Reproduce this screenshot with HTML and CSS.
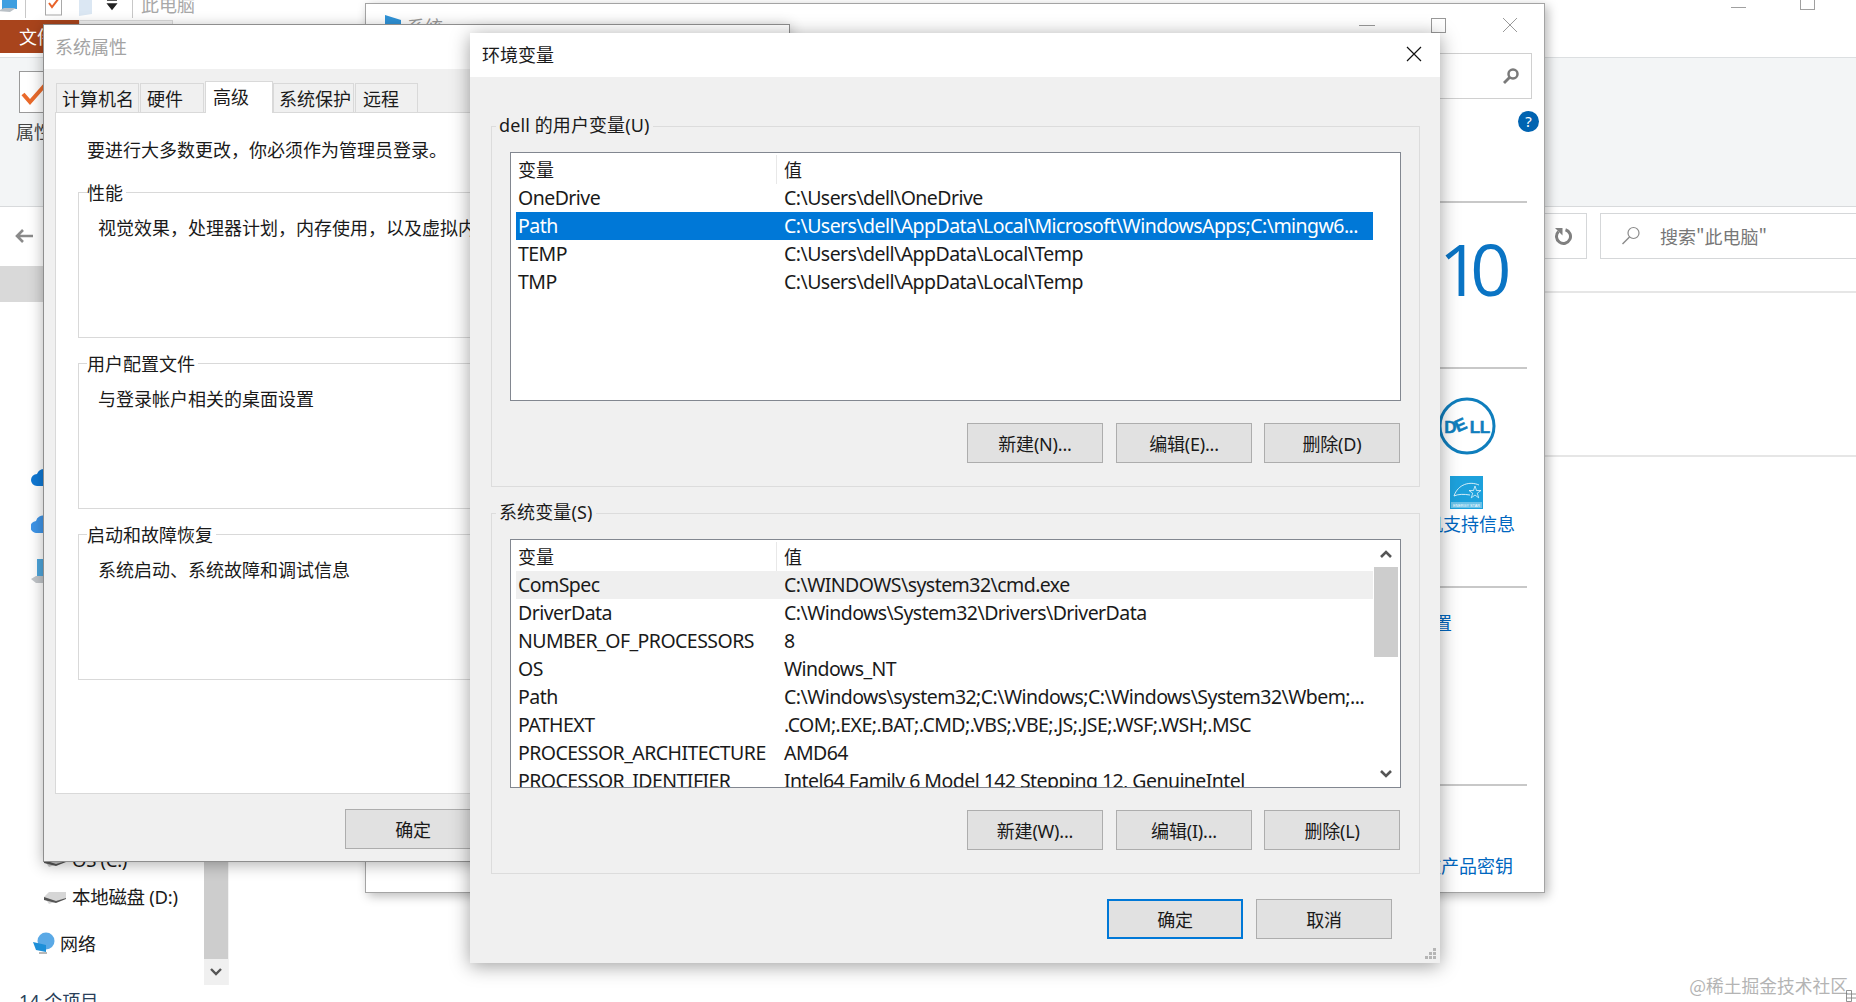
FILE: index.html
```html
<!DOCTYPE html>
<html lang="zh-CN">
<head>
<meta charset="utf-8">
<title>环境变量</title>
<link rel="stylesheet" href="styles.css">
</head>
<body>
<div class="desktop">

  <section class="explorer">
    <div class="qat">
      <svg class="qat-pc" width="20" height="26" viewBox="0 0 20 26"><path d="M4 2h15v16H4z" fill="#3f9fe0"/><path d="M0 20l6-3h12l-6 4z" fill="#b9c0c6"/></svg>
      <span class="qat-sep"></span>
      <svg class="qat-check" width="18" height="24" viewBox="0 0 18 24"><rect x=".5" y="1" width="16" height="22" fill="#fff" stroke="#a9a9a9"/><path d="M4 11l3 4 7-9" fill="none" stroke="#e8632a" stroke-width="2"/></svg>
      <svg class="qat-folder" width="14" height="24" viewBox="0 0 14 24"><path d="M0 2l13 2v18l-13 2z" fill="#dbe7f3"/></svg>
      <svg class="qat-drop" width="12" height="24" viewBox="0 0 12 24"><path d="M1 8h10M2 12h8l-4 5z" stroke="#222" stroke-width="1.5" fill="#222"/></svg>
      <span class="qat-sep qat-sep-wide"></span>
      <span class="qat-title">此电脑</span>
      <span class="win-controls-back"><i class="wc-min"></i><i class="wc-rest"></i></span>
    </div>
    <div class="ribbon-tabs">
      <span class="file-tab">文件</span>
      <span class="next-tab"></span>
    </div>
    <div class="ribbon">
      <div class="ribbon-item">
        <svg width="28" height="42" viewBox="0 0 28 42"><rect x=".5" y=".5" width="27" height="41" fill="#fff" stroke="#9a9a9a"/><path d="M4 23l7 8 15-17" fill="none" stroke="#ea6a2b" stroke-width="4"/></svg>
        <span>属性</span>
      </div>
    </div>
    <div class="address">
      <svg class="back" width="20" height="16" viewBox="0 0 20 16"><path d="M19 8H3M9 2L3 8l6 6" fill="none" stroke="#8a8a8a" stroke-width="2.6"/></svg>
      <div class="refresh">
        <svg width="18" height="20" viewBox="0 0 18 20"><path d="M4.500 5.500a7 7 0 1 0 7-1.800" fill="none" stroke="#808080" stroke-width="3"/><path d="M1 2h7.500v7.500z" fill="#808080"/></svg>
      </div>
      <div class="search">
        <svg width="20" height="20" viewBox="0 0 20 20"><circle cx="12.500" cy="7" r="5.500" fill="none" stroke="#8a8a8a" stroke-width="1.200"/><path d="M8.500 11L1.500 18" stroke="#8a8a8a" stroke-width="1.400"/></svg>
        <span>搜索"此电脑"</span>
      </div>
    </div>
    <div class="main">
      <nav class="sidebar">
        <div class="nav-list">
          <div class="nav-row selected"></div>
          <div class="nav-row gap-onedrive"><svg width="14" height="18" viewBox="0 0 14 18"><path d="M14 1a8 8 0 0 0-8 5 6 6 0 0 0 0 12h8z" fill="#0f78d4"/></svg></div>
          <div class="nav-row gap-small"><svg width="14" height="18" viewBox="0 0 14 18"><path d="M14 1a7 7 0 0 0-9 5 6 6 0 0 0 1 12h8z" fill="#3f95e8"/></svg></div>
          <div class="nav-row gap-small"><svg width="18" height="24" viewBox="0 0 18 24"><path d="M6 0h12v17H6z" fill="#4ea6dc"/><path d="M0 20l5-3h13v7H5z" fill="#c2c6ca"/></svg></div>
          <div class="nav-row gap-drive"><svg class="disk" width="22" height="12" viewBox="0 0 22 12"><path d="M0 5l5-5h17v6l-17 6z" fill="#c9c9c9"/><path d="M0 5l12 4 10-3v1L12 11 0 8z" fill="#555"/></svg><span class="drive-label">OS (C:)</span></div>
          <div class="nav-row gap-tiny"><svg class="disk" width="22" height="12" viewBox="0 0 22 12"><path d="M0 5l5-5h17v6l-17 6z" fill="#d6d6d6"/><path d="M0 5l12 4 10-3v1L12 11 0 8z" fill="#555"/></svg><span class="drive-label">本地磁盘 (D:)</span></div>
          <div class="nav-row gap-net"><svg class="net" width="22" height="22" viewBox="0 0 22 22"><circle cx="13" cy="9" r="8.500" fill="#5aa9e6"/><path d="M0 10l13 3v7L3 18z" fill="#1d8fd8"/><path d="M6 20h8v2H6z" fill="#b8b8b8"/></svg><span class="net-label">网络</span></div>
        </div>
        <div class="nav-scroll">
          <div class="nav-thumb"></div>
          <div class="nav-btn"><svg width="14" height="10" viewBox="0 0 14 10"><path d="M2 2l5 5 5-5" fill="none" stroke="#555" stroke-width="2.400"/></svg></div>
        </div>
      </nav>
      <div class="content">
        <div class="content-head"></div>
        <div class="content-band"></div>
      </div>
    </div>
    <div class="status">14 个项目</div>
  </section>

  <section class="system-win">
    <header class="sys-title">
      <svg class="sys-icon" width="16" height="20" viewBox="0 0 16 20"><path d="M0 0l16 5v15H0z" fill="#2f93d8"/><path d="M4 12l3 3 5-5" fill="none" stroke="#fff" stroke-width="1.500"/></svg>
      <span class="sys-name">系统</span>
      <span class="sys-controls">
        <i class="sc-min"></i>
        <i class="sc-max"></i>
        <svg width="16" height="16" viewBox="0 0 16 16"><path d="M1 1l14 14M15 1L1 15" stroke="#999" stroke-width="1"/></svg>
      </span>
    </header>
    <div class="sys-search">
      <svg width="18" height="18" viewBox="0 0 18 18"><circle cx="11" cy="7" r="4.500" fill="none" stroke="#7a7a7a" stroke-width="2.500"/><path d="M7.500 10.500L2 16" stroke="#7a7a7a" stroke-width="2.800"/></svg>
    </div>
    <div class="help">?</div>
    <div class="sys-col">
      <hr class="sys-rule">
      <div class="ten">10</div>
      <hr class="sys-rule">
      <div class="logos">
        <svg class="dell" width="58" height="58" viewBox="0 0 58 58"><circle cx="29" cy="29" r="27" fill="#fff" stroke="#0f7ebd" stroke-width="3"/><text x="29" y="35.500" text-anchor="middle" class="dell-text" dx="0 1.500 1 0" rotate="0 -24 0 0">DELL</text></svg>
        <svg class="estar" width="33" height="33" viewBox="0 0 33 33"><rect width="33" height="33" fill="#1da1dc"/><path d="M4 20C8 8 20 5 29 9" fill="none" stroke="#fff" stroke-width=".8"/><path d="M25 10l1.500 4.500h4.500l-3.700 2.700 1.400 4.600-3.700-2.800-3.700 2.800 1.400-4.600-3.700-2.700h4.500z" fill="none" stroke="#fff" stroke-width=".7"/><path d="M4 20c4-2 10-2 16-1" fill="none" stroke="#fff" stroke-width=".8"/><rect x="1" y="26" width="31" height="6" fill="#fff" opacity=".35"/><text x="16.500" y="31" text-anchor="middle" class="estar-text">ENERGY STAR</text></svg>
        <span class="sys-link link-support">联机支持信息</span>
      </div>
      <hr class="sys-rule">
      <span class="sys-link link-set">更改设置</span>
      <hr class="sys-rule rule-key">
      <span class="sys-link link-key">更改产品密钥</span>
    </div>
  </section>

  <section class="props">
    <header class="dlg-title props-title">系统属性</header>
    <div class="props-body">
      <div class="tabs">
        <span class="tab tab-a">计算机名</span>
        <span class="tab tab-b">硬件</span>
        <span class="tab tab-c active">高级</span>
        <span class="tab tab-d">系统保护</span>
        <span class="tab tab-e">远程</span>
      </div>
      <div class="panel">
        <p class="intro">要进行大多数更改，你必须作为管理员登录。</p>
        <fieldset class="pgroup">
          <legend>性能</legend>
          <p>视觉效果，处理器计划，内存使用，以及虚拟内存</p>
        </fieldset>
        <fieldset class="pgroup">
          <legend>用户配置文件</legend>
          <p>与登录帐户相关的桌面设置</p>
        </fieldset>
        <fieldset class="pgroup">
          <legend>启动和故障恢复</legend>
          <p>系统启动、系统故障和调试信息</p>
        </fieldset>
      </div>
      <div class="props-foot"><button class="btn">确定</button></div>
    </div>
  </section>

  <section class="env">
    <header class="dlg-title env-title">
      <span>环境变量</span>
      <svg width="16" height="16" viewBox="0 0 16 16"><path d="M1 1l14 14M15 1L1 15" stroke="#111" stroke-width="1.200"/></svg>
    </header>
    <div class="env-body">
      <fieldset class="vgroup">
        <legend>dell 的用户变量(U)</legend>
        <div class="list">
          <div class="rows">
            <div class="row head"><span>变量</span><span>值</span></div>
            <div class="row"><span>OneDrive</span><span>C:\Users\dell\OneDrive</span></div>
            <div class="row sel"><span>Path</span><span>C:\Users\dell\AppData\Local\Microsoft\WindowsApps;C:\mingw6...</span></div>
            <div class="row"><span>TEMP</span><span>C:\Users\dell\AppData\Local\Temp</span></div>
            <div class="row"><span>TMP</span><span>C:\Users\dell\AppData\Local\Temp</span></div>
          </div>
          <div class="scroll-none"></div>
        </div>
        <div class="btn-row">
          <button class="btn">新建(N)...</button>
          <button class="btn">编辑(E)...</button>
          <button class="btn">删除(D)</button>
        </div>
      </fieldset>
      <fieldset class="vgroup">
        <legend>系统变量(S)</legend>
        <div class="list">
          <div class="rows">
            <div class="row head"><span>变量</span><span>值</span></div>
            <div class="row hover"><span>ComSpec</span><span>C:\WINDOWS\system32\cmd.exe</span></div>
            <div class="row"><span>DriverData</span><span>C:\Windows\System32\Drivers\DriverData</span></div>
            <div class="row"><span>NUMBER_OF_PROCESSORS</span><span>8</span></div>
            <div class="row"><span>OS</span><span>Windows_NT</span></div>
            <div class="row"><span>Path</span><span>C:\Windows\system32;C:\Windows;C:\Windows\System32\Wbem;...</span></div>
            <div class="row"><span>PATHEXT</span><span>.COM;.EXE;.BAT;.CMD;.VBS;.VBE;.JS;.JSE;.WSF;.WSH;.MSC</span></div>
            <div class="row"><span>PROCESSOR_ARCHITECTURE</span><span>AMD64</span></div>
            <div class="row"><span>PROCESSOR_IDENTIFIER</span><span>Intel64 Family 6 Model 142 Stepping 12, GenuineIntel</span></div>
          </div>
          <div class="vscroll">
            <div class="vs-btn"><svg width="14" height="10" viewBox="0 0 14 10"><path d="M2 8l5-5 5 5" fill="none" stroke="#555" stroke-width="2.600"/></svg></div>
            <div class="vs-thumb"></div>
            <div class="vs-space"></div>
            <div class="vs-btn"><svg width="14" height="10" viewBox="0 0 14 10"><path d="M2 2l5 5 5-5" fill="none" stroke="#555" stroke-width="2.600"/></svg></div>
          </div>
        </div>
        <div class="btn-row">
          <button class="btn">新建(W)...</button>
          <button class="btn">编辑(I)...</button>
          <button class="btn">删除(L)</button>
        </div>
      </fieldset>
      <div class="btn-row env-foot">
        <button class="btn primary">确定</button>
        <button class="btn">取消</button>
      </div>
    </div>
    <svg class="grip" width="12" height="12" viewBox="0 0 12 12"><path d="M9 0h3v3H9zM5 4h3v3H5zM9 4h3v3H9zM1 8h3v3H1zM5 8h3v3H5zM9 8h3v3H9z" fill="#b5b5b5"/></svg>
  </section>

  <div class="watermark">@稀土掘金技术社区</div>
  <svg class="corner-glyph" width="10" height="12" viewBox="0 0 10 12"><path d="M.5 .5h5v11h-5zM.5 4h5M.5 8h5M6 4h4M6 8h4" fill="none" stroke="#777" stroke-width=".8"/></svg>
</div>
</body>
</html>
```

FILE: styles.css
```css
* { box-sizing: border-box; }
html, body { margin: 0; padding: 0; }
body {
  width: 1856px;
  height: 1002px;
  overflow: hidden;
  background: #fff;
  font-family: "Noto Sans", "Noto Sans CJK SC", sans-serif;
  font-size: 18px;
  color: #1a1a1a;
}
p { margin: 0; }
.desktop { position: relative; width: 1856px; height: 1002px; overflow: hidden; background: #fff; }

/* Explorer behind everything */
.explorer { position: absolute; inset: 0; display: flex; flex-direction: column; }
.qat { height: 32px; margin-top: -12px; display: flex; align-items: center; flex: none; }
.qat-pc { margin-left: -2px; }
.qat-sep { width: 1px; height: 28px; background: #c8c8c8; margin-left: 7px; }
.qat-sep-wide { margin-left: 14px; }
.qat-check { margin-left: 19px; }
.qat-folder { margin-left: 16px; }
.qat-drop { margin-left: 13px; }
.qat-title { color: #a8a8a8; margin-left: 8px; font-family: "Noto Sans CJK SC", sans-serif; }
.win-controls-back { margin-left: auto; display: flex; align-items: center; gap: 54px; margin-right: 41px; }
.wc-min { width: 15px; height: 1px; background: #a0a0a0; margin-top: 6px; }
.wc-rest { width: 15px; height: 12px; border: 1px solid #a0a0a0; }

.ribbon-tabs { height: 33px; display: flex; flex: none; border-bottom: 0; }
.file-tab { width: 79px; background: #a8441c; color: #fff; padding-left: 19px; line-height: 33px; font-family: "Noto Sans CJK SC", sans-serif; }
.next-tab { width: 94px; height: 4px; background: #f0f0f0; border: 1px solid #d8d8d8; border-bottom: 0; }
.ribbon { margin-top: 4px; height: 150px; flex: none; background: #f3f5f6; border-top: 1px solid #dcdfe1; border-bottom: 1px solid #d8dadc; padding: 13px 0 0 19px; }
.ribbon-item { display: flex; flex-direction: column; align-items: flex-start; color: #444; }
.ribbon-item span { margin: 6px 0 0 -3px; line-height: 24px; font-family: "Noto Sans CJK SC", sans-serif; }

.address { height: 59px; flex: none; display: flex; align-items: flex-start; padding-top: 6px; }
.back { margin: 15px 0 0 14px; flex: none; }
.refresh { width: 160px; height: 46px; margin-left: 1393px; flex: none; border: 1px solid #d5d7d9; display: flex; align-items: center; justify-content: flex-end; padding-right: 14px; }
.search { width: 270px; height: 46px; margin-left: 13px; flex: none; border: 1px solid #d5d7d9; display: flex; align-items: center; padding-left: 20px; gap: 19px; color: #777; font-family: "Noto Sans CJK SC", sans-serif; }

.main { height: 719px; flex: none; display: flex; }
.sidebar { width: 229px; flex: none; display: flex; border-right: 1px solid #f2f2f2; }
.nav-list { width: 204px; flex: none; }
.nav-row { height: 36px; display: flex; align-items: center; padding-left: 31px; }
.nav-row.selected { background: #d9d9d9; }
.gap-onedrive { margin-top: 157px; }
.gap-small { margin-top: 11px; }
.gap-drive { margin-top: 252px; }
.gap-tiny { margin-top: 1px; }
.gap-net { margin-top: 11px; padding-left: 33px; }
.disk { margin: 4px 0 0 13px; flex: none; }
.net { flex: none; }
.drive-label { margin-left: 6px; font-size: 18.500px; white-space: nowrap; font-family: "Noto Sans", "Noto Sans CJK SC", sans-serif; letter-spacing: -.3px; }
.net-label { margin-left: 5px; font-family: "Noto Sans CJK SC", sans-serif; }
.nav-scroll { width: 24px; display: flex; flex-direction: column; }
.nav-thumb { flex: 1; background: #cdcdcd; }
.nav-btn { height: 26px; background: #f0f0f0; display: flex; align-items: center; justify-content: center; }
.content { flex: 1; }
.content-head { height: 27px; border-bottom: 2px solid #e6e6e6; }
.content-band { height: 164px; border-bottom: 2px solid #e6e6e6; }
.status { color: #2a3f5a; padding: 4px 0 0 19px; line-height: 24px; white-space: nowrap; font-family: "Noto Sans", "Noto Sans CJK SC", sans-serif; }

/* System control-panel window */
.system-win { position: absolute; left: 365px; top: 3px; width: 1180px; height: 890px; background: #fff; border: 1px solid #a4a4a4; box-shadow: 3px 3px 10px rgba(0,0,0,.28); display: flex; flex-direction: column; }
.sys-title { height: 49px; flex: none; display: flex; align-items: flex-start; padding: 10px 26px 0 19px; }
.sys-name { color: #999; font-size: 18px; margin-left: 6px; font-family: "Noto Sans CJK SC", sans-serif; line-height: 24px; }
.sys-icon { margin-top: 1px; }
.sys-controls { margin-left: auto; display: flex; align-items: center; gap: 56px; margin-top: 3px; }
.sc-min { width: 16px; height: 1px; background: #999; }
.sc-max { width: 15px; height: 15px; border: 1px solid #999; }
.sys-search { width: 300px; height: 46px; margin-left: auto; margin-right: 12px; flex: none; border: 1px solid #d0d0d0; display: flex; align-items: center; justify-content: flex-end; padding-right: 11px; }
.help { width: 21px; height: 21px; margin: 12px 5px 0 auto; flex: none; border-radius: 50%; background: #0063b1; color: #fff; font-size: 15px; line-height: 21px; text-align: center; }
.sys-col { width: 300px; margin: 69px 17px 0 auto; display: flex; flex-direction: column; align-items: flex-start; }
.sys-rule { width: 100%; height: 2px; margin: 0; border: 0; background: #c8c8c8; flex: none; }
.ten { height: 164px; margin-left: 212px; font-family: "Open Sans", sans-serif; font-weight: 400; font-size: 72px; line-height: 131px; color: #0a74c4; letter-spacing: -10px; }
.logos { height: 217px; width: 100%; display: flex; flex-direction: column; }
.dell { margin: 28px 0 0 211px; flex: none; }
.dell-text { font-family: "Liberation Sans", sans-serif; font-weight: 700; font-size: 17px; letter-spacing: -.4px; fill: #0f7ebd; stroke: #0f7ebd; stroke-width: .5px; }
.estar { margin: 21px 0 0 223px; flex: none; }
.estar-text { font-family: "Liberation Sans", sans-serif; font-size: 3.800px; fill: #fff; }
.sys-link { color: #0067c0; white-space: nowrap; line-height: 24px; font-family: "Noto Sans CJK SC", sans-serif; }
.link-support { margin: 2px 0 0 180px; }
.link-set { margin: 22px 0 0 153px; }
.rule-key { margin-top: 150px; }
.link-key { margin: 67px 0 0 178px; }

/* Dialogs */
.dlg-title { background: #fff; flex: none; display: flex; align-items: center; font-family: "Noto Sans CJK SC", sans-serif; }

.props { position: absolute; left: 43px; top: 24px; width: 747px; height: 838px; background: #f0f0f0; border: 1px solid #8e8e8e; box-shadow: 0 3px 14px rgba(0,0,0,.3); display: flex; flex-direction: column; }
.props-title { height: 44px; color: #a3a3a3; padding: 0 0 3px 11px; }
.props-body { flex: 1; padding: 14px 9px 0 11px; display: flex; flex-direction: column; }
.tabs { display: flex; height: 29px; flex: none; margin: 0 0 0 1px; font-family: "Noto Sans CJK SC", sans-serif; position: relative; z-index: 1; }
.tab { background: #f0f0f0; border: 1px solid #d9d9d9; border-bottom: 0; line-height: 28px; padding-left: 5px; margin-right: 1px; flex: none; height: 29px; }
.tab-a { width: 83px; }
.tab-b { width: 64px; padding-left: 6px; }
.tab-c { width: 68px; }
.tab-d { width: 81px; }
.tab-e { width: 63px; padding-left: 7px; }
.tab.active { background: #fff; margin-top: -2px; height: 32px; line-height: 29px; padding-left: 7px; margin-right: 0; border-bottom: 0; }
.panel { height: 682px; flex: none; background: #fff; border: 1px solid #d9d9d9; padding: 24px 9px 0 22px; font-family: "Noto Sans CJK SC", sans-serif; }
.intro { line-height: 24px; margin-left: 9px; }
.pgroup { height: 158px; margin: 19px 0 13px; padding: 0 0 0 19px; border: 1px solid #d9d9d9; min-width: 0; }
.pgroup legend { margin-left: -11px; padding: 0 3px 0 0; line-height: 24px; }
.pgroup p { line-height: 24px; margin-top: 11px; white-space: nowrap; overflow: hidden; }
.pgroup + .pgroup { margin-top: 0; }
.props-foot { padding: 15px 0 0 290px; }

.btn { width: 136px; height: 40px; flex: none; padding: 0; background: #e1e1e1; border: 1px solid #adadad; color: #1a1a1a; font: inherit; font-family: "Noto Sans", "Noto Sans CJK SC", sans-serif; letter-spacing: -.2px; }
.btn.primary { border: 2px solid #0078d7; }

.env { position: absolute; left: 470px; top: 33px; width: 970px; height: 930px; background: #f0f0f0; box-shadow: 0 3px 18px rgba(0,0,0,.38); display: flex; flex-direction: column; }
.env-title { height: 44px; justify-content: space-between; padding: 0 18px 2px 12px; }
.env-body { flex: 1; padding: 37px 20px 0 21px; }
.vgroup { margin: 0 0 14px; padding: 0 18px 23px 18px; border: 1px solid #dcdcdc; min-width: 0; }
.vgroup legend { margin-left: -14px; padding: 0 4px 0 3px; line-height: 24px; letter-spacing: .1px; transform: translateY(-1px); }
.list { margin-top: 14px; height: 249px; background: #fff; border: 1px solid #828790; display: flex; overflow: hidden; }
.rows { width: 862px; flex: none; padding: 2px 0 0 5px; }
.row { display: grid; grid-template-columns: 266px 1fr; height: 28px; line-height: 28px; padding-left: 2px; white-space: nowrap; font-size: 19.500px; letter-spacing: -.55px; color: #1a1a1a; }
.row.head { height: 29px; font-family: "Noto Sans CJK SC", sans-serif; font-size: 18px; letter-spacing: 0; }
.row.head span:first-child { border-right: 1px solid #e8e8e8; margin-right: 7px; }
.row.sel { background: #0078d7; color: #fff; }
.row.hover { background: #efefef; }
.scroll-none { flex: 1; }
.vscroll { width: 24px; margin-left: 1px; display: flex; flex-direction: column; flex: none; }
.vs-btn { height: 27px; flex: none; display: flex; align-items: center; justify-content: center; }
.vs-thumb { height: 90px; background: #cdcdcd; flex: none; }
.vs-space { flex: 1; }
.btn-row { display: flex; justify-content: flex-end; gap: 12px; margin: 22px 1px 0 0; }
.vgroup .btn:first-child { margin-right: 1px; }
.env-foot { margin: 25px 28px 0 0; gap: 13px; }
.grip { position: absolute; right: 4px; bottom: 3px; }

.watermark { position: absolute; right: 8px; bottom: 5px; color: #b4b4b4; font-family: "Noto Sans CJK SC", sans-serif; font-size: 17.750px; line-height: 24px; }
.corner-glyph { position: absolute; right: 0; bottom: 0; }
```
